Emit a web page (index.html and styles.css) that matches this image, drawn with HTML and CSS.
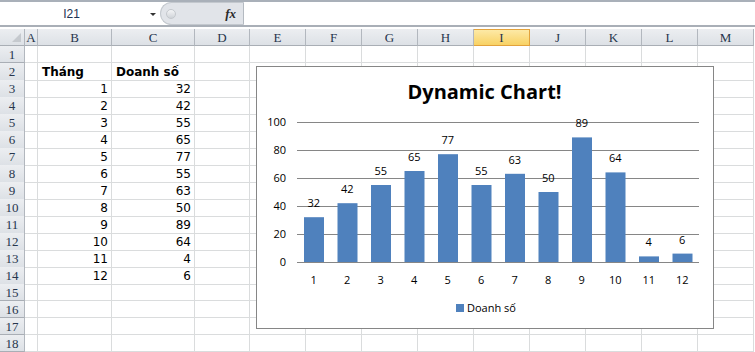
FILE: index.html
```html
<!DOCTYPE html>
<html lang="vi">
<head>
  <meta charset="UTF-8">
  <title>Dynamic Chart</title>
  <link rel="stylesheet" href="styles.css">
</head>
<body>
  <div class="page">
    <div class="fbar">
      <div class="namebox"><span class="name">I21</span><span class="dd"></span></div>
      <div class="fxwrap"><span class="knob"></span><span class="fx">fx</span></div>
      <div class="finput"></div>
    </div>

    <div class="sheet">
      <div class="row head">
        <div class="corner"></div><div>A</div><div>B</div><div>C</div><div>D</div><div>E</div><div>F</div><div>G</div><div>H</div><div class="sel">I</div><div>J</div><div>K</div><div>L</div><div>M</div>
      </div>
      <div class="row"><div class="rh">1</div><div></div><div></div><div></div><div></div><div></div><div></div><div></div><div></div><div></div><div></div><div></div><div></div><div></div></div>
      <div class="row"><div class="rh">2</div><div></div><div class="b">Tháng</div><div class="b">Doanh số</div><div></div><div></div><div></div><div></div><div></div><div></div><div></div><div></div><div></div><div></div></div>
      <div class="row"><div class="rh">3</div><div></div><div class="n">1</div><div class="n">32</div><div></div><div></div><div></div><div></div><div></div><div></div><div></div><div></div><div></div><div></div></div>
      <div class="row"><div class="rh">4</div><div></div><div class="n">2</div><div class="n">42</div><div></div><div></div><div></div><div></div><div></div><div></div><div></div><div></div><div></div><div></div></div>
      <div class="row"><div class="rh">5</div><div></div><div class="n">3</div><div class="n">55</div><div></div><div></div><div></div><div></div><div></div><div></div><div></div><div></div><div></div><div></div></div>
      <div class="row"><div class="rh">6</div><div></div><div class="n">4</div><div class="n">65</div><div></div><div></div><div></div><div></div><div></div><div></div><div></div><div></div><div></div><div></div></div>
      <div class="row"><div class="rh">7</div><div></div><div class="n">5</div><div class="n">77</div><div></div><div></div><div></div><div></div><div></div><div></div><div></div><div></div><div></div><div></div></div>
      <div class="row"><div class="rh">8</div><div></div><div class="n">6</div><div class="n">55</div><div></div><div></div><div></div><div></div><div></div><div></div><div></div><div></div><div></div><div></div></div>
      <div class="row"><div class="rh">9</div><div></div><div class="n">7</div><div class="n">63</div><div></div><div></div><div></div><div></div><div></div><div></div><div></div><div></div><div></div><div></div></div>
      <div class="row"><div class="rh">10</div><div></div><div class="n">8</div><div class="n">50</div><div></div><div></div><div></div><div></div><div></div><div></div><div></div><div></div><div></div><div></div></div>
      <div class="row"><div class="rh">11</div><div></div><div class="n">9</div><div class="n">89</div><div></div><div></div><div></div><div></div><div></div><div></div><div></div><div></div><div></div><div></div></div>
      <div class="row"><div class="rh">12</div><div></div><div class="n">10</div><div class="n">64</div><div></div><div></div><div></div><div></div><div></div><div></div><div></div><div></div><div></div><div></div></div>
      <div class="row"><div class="rh">13</div><div></div><div class="n">11</div><div class="n">4</div><div></div><div></div><div></div><div></div><div></div><div></div><div></div><div></div><div></div><div></div></div>
      <div class="row"><div class="rh">14</div><div></div><div class="n">12</div><div class="n">6</div><div></div><div></div><div></div><div></div><div></div><div></div><div></div><div></div><div></div><div></div></div>
      <div class="row"><div class="rh">15</div><div></div><div></div><div></div><div></div><div></div><div></div><div></div><div></div><div></div><div></div><div></div><div></div><div></div></div>
      <div class="row"><div class="rh">16</div><div></div><div></div><div></div><div></div><div></div><div></div><div></div><div></div><div></div><div></div><div></div><div></div><div></div></div>
      <div class="row"><div class="rh">17</div><div></div><div></div><div></div><div></div><div></div><div></div><div></div><div></div><div></div><div></div><div></div><div></div><div></div></div>
      <div class="row"><div class="rh">18</div><div></div><div></div><div></div><div></div><div></div><div></div><div></div><div></div><div></div><div></div><div></div><div></div><div></div></div>
    </div>

    <!-- chart object floats over the grid -->
    <div class="chart">
      <svg width="456" height="261" viewBox="1 1 456 261">
        <text class="title" x="228.5" y="33">Dynamic Chart!</text>

        <g class="grid">
          <line x1="41" y1="56.5" x2="443" y2="56.5"/>
          <line x1="41" y1="84.5" x2="443" y2="84.5"/>
          <line x1="41" y1="112.5" x2="443" y2="112.5"/>
          <line x1="41" y1="140.5" x2="443" y2="140.5"/>
          <line x1="41" y1="168.5" x2="443" y2="168.5"/>
        </g>

        <g class="yl">
          <text x="30" y="60">100</text>
          <text x="30" y="88">80</text>
          <text x="30" y="116">60</text>
          <text x="30" y="144">40</text>
          <text x="30" y="172">20</text>
          <text x="30" y="200">0</text>
        </g>

        <g class="bars">
          <rect x="48" y="151.2" width="20" height="44.8"/>
          <rect x="81.5" y="137.2" width="20" height="58.8"/>
          <rect x="115" y="119" width="20" height="77"/>
          <rect x="148.5" y="105" width="20" height="91"/>
          <rect x="182" y="88.2" width="20" height="107.8"/>
          <rect x="215.5" y="119" width="20" height="77"/>
          <rect x="249" y="107.8" width="20" height="88.2"/>
          <rect x="282.5" y="126" width="20" height="70"/>
          <rect x="316" y="71.4" width="20" height="124.6"/>
          <rect x="349.5" y="106.4" width="20" height="89.6"/>
          <rect x="383" y="190.4" width="20" height="5.6"/>
          <rect x="416.5" y="187.6" width="20" height="8.4"/>
        </g>
        <line class="axis" x1="41" y1="196.5" x2="443" y2="196.5"/>

        <g class="dl">
          <text x="57.75" y="141.2">32</text>
          <text x="91.25" y="127.2">42</text>
          <text x="124.75" y="109">55</text>
          <text x="158.25" y="95">65</text>
          <text x="191.75" y="78.2">77</text>
          <text x="225.25" y="109">55</text>
          <text x="258.75" y="97.8">63</text>
          <text x="292.25" y="116">50</text>
          <text x="325.75" y="61.4">89</text>
          <text x="359.25" y="96.4">64</text>
          <text x="392.75" y="180.4">4</text>
          <text x="426.25" y="177.6">6</text>
        </g>

        <g class="xl">
          <text x="57.75" y="218">1</text>
          <text x="91.25" y="218">2</text>
          <text x="124.75" y="218">3</text>
          <text x="158.25" y="218">4</text>
          <text x="191.75" y="218">5</text>
          <text x="225.25" y="218">6</text>
          <text x="258.75" y="218">7</text>
          <text x="292.25" y="218">8</text>
          <text x="325.75" y="218">9</text>
          <text x="359.25" y="218">10</text>
          <text x="392.75" y="218">11</text>
          <text x="426.25" y="218">12</text>
        </g>

        <rect class="key" x="200" y="238" width="8" height="8"/>
        <text class="legend" x="211" y="246">Doanh số</text>
      </svg>
    </div>
  </div>
</body>
</html>
```

FILE: styles.css
```css
body {
  margin: 0;
  background-color: #fff;
  font-family: "DejaVu Sans", sans-serif;
  overflow: hidden;
}

.page {
  position: relative;
  width: 755px;
  height: 352px;
}

/* formula bar */
.fbar {
  display: flex;
  height: 23px;
  border-top: 2px solid #a9b0b9;
  border-bottom: 2px solid #a9afb7;
  margin-bottom: 2px;
}

.namebox {
  display: flex;
  align-items: center;
  width: 160px;
  background-color: #fff;
}

.name {
  width: 143px;
  text-align: center;
  font-family: "Liberation Sans", sans-serif;
  font-size: 12px;
  color: #1e3453;
}

.dd {
  margin-left: 7px;
  margin-top: 2px;
  border-left: 3px solid transparent;
  border-right: 3px solid transparent;
  border-top: 3px solid #333;
}

.fxwrap {
  display: flex;
  align-items: center;
  justify-content: space-between;
  width: 84px;
  padding: 0 7px 0 5px;
  box-sizing: border-box;
  background-color: #e1e4e9;
  border: 1px solid #c3c8ce;
  border-right-color: #b4bac1;
  border-radius: 12px 0 0 12px;
}

.knob {
  width: 8px;
  height: 8px;
  border-radius: 50%;
  background: linear-gradient(#f4f5f7, #cfd3d8);
  border: 1px solid #c4c8cd;
}

.fx {
  font-family: "Liberation Serif", serif;
  font-style: italic;
  font-weight: bold;
  font-size: 13px;
  color: #2a2a2a;
}

.finput {
  flex: 1;
  background-color: #fff;
}

/* grid */
.row {
  display: grid;
  grid-template-columns: 25px 13px 74px 83px 55px repeat(9, 56px);
  height: 17px;
}

.row > div {
  box-sizing: border-box;
  border-right: 1px solid #dadcdd;
  border-bottom: 1px solid #dadcdd;
  font-size: 12px;
  line-height: 15px;
  padding: 2px 3px 0;
  white-space: nowrap;
  color: #000;
}

.row > .n {
  text-align: right;
  padding-right: 3px;
}

.row > .b {
  font-weight: bold;
  padding-left: 4px;
}

.head > div,
.row > .rh {
  background: linear-gradient(#eceef1, #dde1e6);
  border-right: 1px solid #b2b7be;
  border-bottom: 1px solid #a9aeb5;
  font-family: "Liberation Serif", serif;
  font-size: 13px;
  color: #27364d;
  text-align: center;
  padding: 1px 0 0;
}

.head > .sel {
  background: linear-gradient(#fde9a6, #f8d264);
  border: 1px solid #e2a23c;
  border-left: none;
  padding-top: 0;
}

.head > .corner {
  position: relative;
}

.corner::after {
  content: "";
  position: absolute;
  right: 3px;
  bottom: 3px;
  border-left: 9px solid transparent;
  border-bottom: 9px solid #c5c9ce;
}

/* chart */
.chart {
  position: absolute;
  left: 256px;
  top: 66px;
  width: 456px;
  height: 261px;
  border: 1px solid #868686;
  background-color: #fff;
}

.chart svg {
  display: block;
}

.chart text {
  font-family: "Open Sans", sans-serif;
  font-size: 11px;
  fill: #000;
}

.chart .title {
  font-size: 20px;
  font-weight: bold;
  text-anchor: middle;
}

.grid line,
.axis {
  stroke: #868686;
  stroke-width: 1;
}

.bars rect,
.key {
  fill: #4f81bd;
}

.yl text {
  text-anchor: end;
}

.dl text,
.xl text {
  text-anchor: middle;
}
```
